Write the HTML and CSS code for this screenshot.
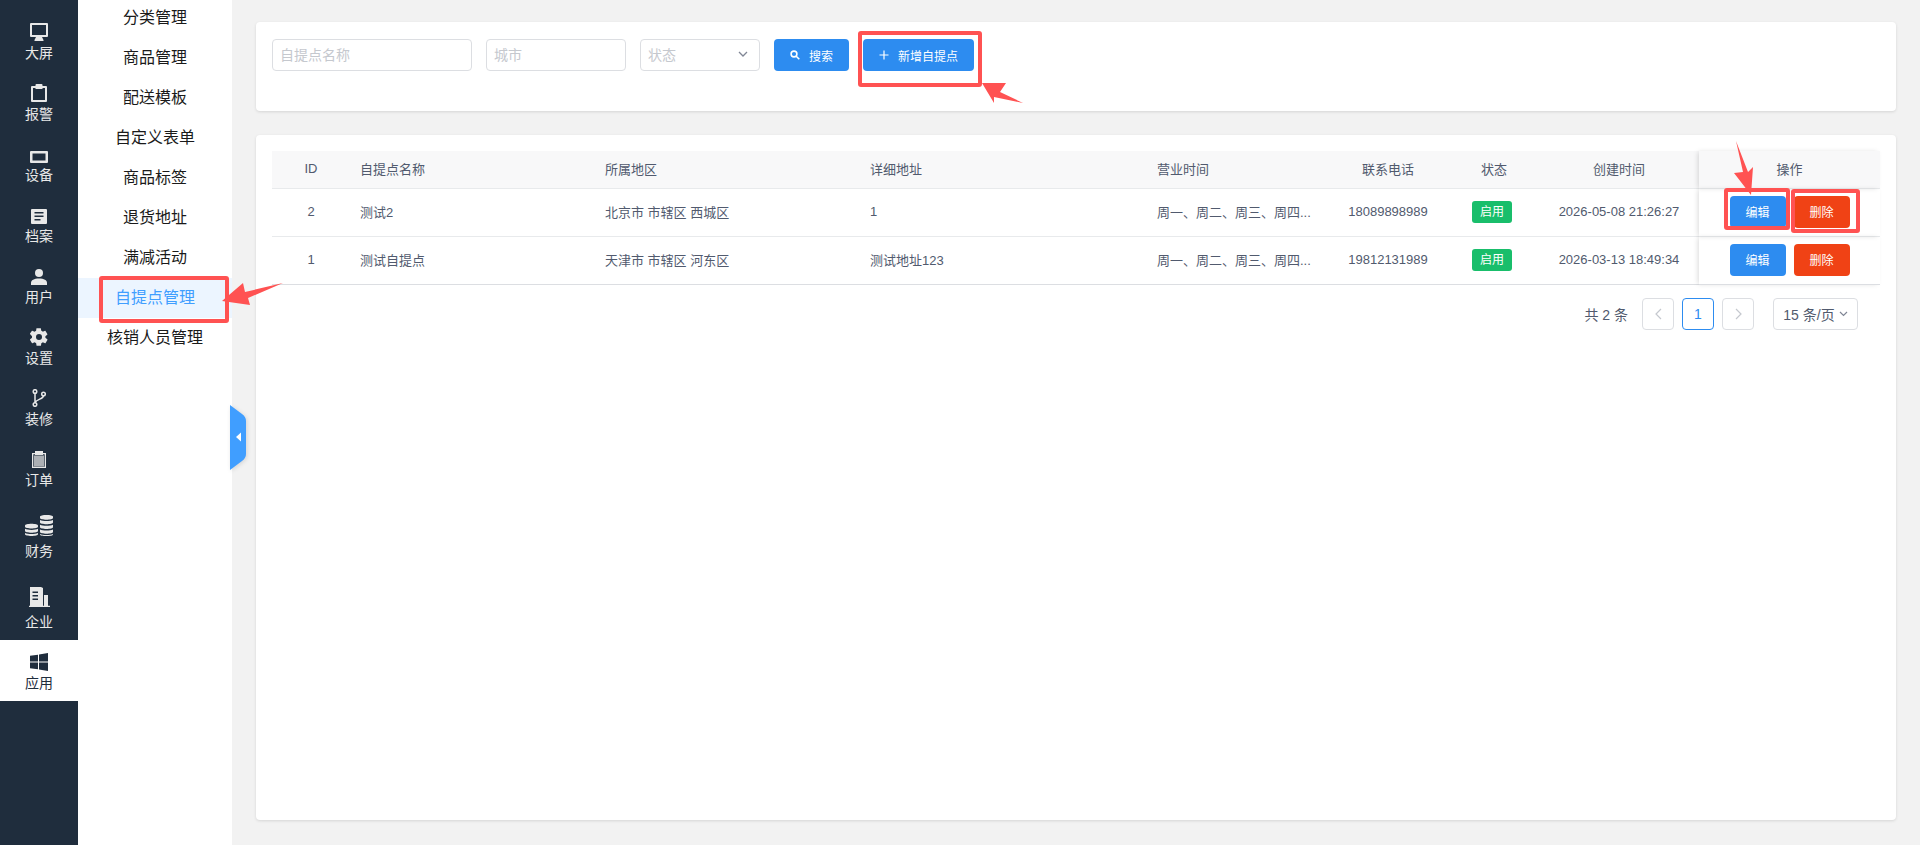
FILE: index.html
```html
<!DOCTYPE html>
<html lang="zh-CN">
<head>
  <meta charset="UTF-8" />
  <title>自提点管理</title>
  <link rel="stylesheet" href="styles.css">
</head>
<body>
  <div class="app">
    <nav class="rail">
      <div class="rail-item">
        <svg class="rail-icon" width="18" height="18" viewBox="0 0 18 18"><path fill="currentColor" fill-rule="evenodd" d="M1 0h16a1 1 0 0 1 1 1v12a1 1 0 0 1-1 1H1a1 1 0 0 1-1-1V1a1 1 0 0 1 1-1zm1 2v10h14V2zM6 14h6l1.500 3v1h-9v-1z"/></svg>
        <span>大屏</span>
      </div>
      <div class="rail-item">
        <svg class="rail-icon" width="16" height="18" viewBox="0 0 16 18"><path fill="currentColor" fill-rule="evenodd" d="M1 2h3.500V1a1 1 0 0 1 1-1h5a1 1 0 0 1 1 1v1H15a1 1 0 0 1 1 1v14a1 1 0 0 1-1 1H1a1 1 0 0 1-1-1V3a1 1 0 0 1 1-1zm1 2v12h12V4h-2.500v1h-7V4z"/></svg>
        <span>报警</span>
      </div>
      <div class="rail-item">
        <svg class="rail-icon" width="18" height="12" viewBox="0 0 18 12"><path fill="currentColor" fill-rule="evenodd" d="M1 0h16a1 1 0 0 1 1 1v10a1 1 0 0 1-1 1H1a1 1 0 0 1-1-1V1a1 1 0 0 1 1-1zm1.500 2.500v7h13v-7z"/></svg>
        <span>设备</span>
      </div>
      <div class="rail-item">
        <svg class="rail-icon" width="16" height="15" viewBox="0 0 16 15"><path fill="currentColor" fill-rule="evenodd" d="M1 0h14a1 1 0 0 1 1 1v13a1 1 0 0 1-1 1H1a1 1 0 0 1-1-1V1a1 1 0 0 1 1-1zm2.500 3v1.500h9V3zm0 3.500V8h9V6.500zm0 3.500v1.500h6V10z"/></svg>
        <span>档案</span>
      </div>
      <div class="rail-item">
        <svg class="rail-icon" width="16" height="16" viewBox="0 0 16 16"><circle cx="8" cy="4" r="4" fill="currentColor"/><path fill="currentColor" d="M0 16v-2c0-3 3-4.500 8-4.500s8 1.500 8 4.500v2z"/></svg>
        <span>用户</span>
      </div>
      <div class="rail-item">
        <svg class="rail-icon" width="18" height="18" viewBox="1.500 1.500 21 21"><path fill="currentColor" d="M19.400 13c.1-.3.100-.7.100-1s0-.7-.1-1l2.200-1.700c.2-.2.300-.4.100-.7l-2.100-3.600c-.1-.2-.4-.3-.6-.2l-2.600 1c-.5-.4-1.100-.8-1.800-1l-.4-2.700c0-.3-.2-.4-.5-.4h-4.200c-.3 0-.5.100-.5.400l-.4 2.700c-.6.300-1.200.6-1.800 1l-2.600-1c-.2-.1-.5 0-.6.200L1.500 8c-.1.300 0 .5.200.7L3.900 11c-.1.300-.1.700-.1 1s0 .7.100 1l-2.200 1.700c-.2.200-.3.400-.1.700l2.100 3.600c.1.200.4.300.6.200l2.600-1c.6.400 1.200.8 1.800 1l.4 2.700c0 .3.200.4.500.4h4.200c.3 0 .5-.1.500-.4l.4-2.700c.7-.3 1.300-.6 1.800-1l2.600 1c.2.100.5 0 .6-.2l2.100-3.600c.1-.3.100-.5-.1-.7zM12 15.500a3.500 3.500 0 1 1 0-7 3.500 3.500 0 0 1 0 7z"/></svg>
        <span>设置</span>
      </div>
      <div class="rail-item">
        <svg class="rail-icon" width="14" height="18" viewBox="0 0 14 18" fill="none" stroke="currentColor" stroke-width="1.500"><circle cx="3" cy="2.500" r="1.800"/><circle cx="3" cy="15.500" r="1.800"/><circle cx="11.500" cy="5" r="1.800"/><path d="M3 4.300v9.400M11.500 6.800c0 3.500-7 3-8.500 6.900"/></svg>
        <span>装修</span>
      </div>
      <div class="rail-item">
        <svg class="rail-icon" width="14" height="17" viewBox="0 0 14 17"><path fill="currentColor" fill-rule="evenodd" d="M0 2h3V0h8v2h3v15H0zm1.300 1.300v12.400h11.400V3.300H11V4H3v-.7z"/><rect x="2" y="4.500" width="10" height="11" fill="currentColor" opacity=".7"/></svg>
        <span>订单</span>
      </div>
      <div class="rail-item rail-item-big">
        <svg class="rail-icon" width="28" height="21" viewBox="0 0 28 21"><g fill="currentColor"><path d="M0 10.500c0-1 3-1.800 6.500-1.800s6.500.8 6.500 1.800v1.300c0 1-3 1.700-6.500 1.700S0 12.800 0 11.800zM0 13.800c1.500.8 3.800 1.100 6.500 1.100s5-.3 6.500-1.100v2.200c0 1-3 1.700-6.500 1.700S0 17 0 16zM0 18c1.500.8 3.800 1.100 6.500 1.100S11.500 18.800 13 18v1.300c0 1-3 1.700-6.500 1.700S0 20.300 0 19.300z"/><path d="M15 1.700C15 .7 18 0 21.500 0S28 .7 28 1.700V3c0 1-3 1.700-6.500 1.700S15 4 15 3zM15 5c1.500.8 3.800 1.100 6.500 1.100S26.500 5.800 28 5v2.600c0 1-3 1.700-6.500 1.700S15 8.600 15 7.600zM15 9.700c1.500.8 3.800 1.100 6.500 1.100s5-.3 6.500-1.100v2.600c0 1-3 1.700-6.500 1.700S15 13.300 15 12.300zM15 14.400c1.500.8 3.800 1.100 6.500 1.100s5-.3 6.500-1.100V17c0 1-3 1.700-6.500 1.700S15 18 15 17zM15 19c1.500.7 3.800 1 6.500 1s5-.3 6.500-1v.5c0 1-3 1.500-6.500 1.500S15 20.500 15 19.500z"/></g></svg>
        <span>财务</span>
      </div>
      <div class="rail-item rail-item-big">
        <svg class="rail-icon" width="21" height="20" viewBox="0 0 21 20"><path fill="currentColor" fill-rule="evenodd" d="M1 0h11l2 1v18h-1V19H1zm2.500 4.500V6H9V4.500zm0 3.500v1.500H9V8zm0 3.500V13H9v-1.500z"/><path fill="currentColor" d="M15 8h4v11h-4zM0 18.800h21V20H0z"/></svg>
        <span>企业</span>
      </div>
      <div class="rail-item rail-item-on">
        <svg class="rail-icon" width="18" height="18" viewBox="0 0 18 18"><path fill="currentColor" d="M0 2.800l8-1.100v6.800H0zM9 1.500L18 0v8.500H9zM0 9.500h8v6.800l-8-1.100zM9 9.500h9V18l-9-1.500z"/></svg>
        <span>应用</span>
      </div>
    </nav>

    <aside class="submenu">
      <div class="submenu-item">分类管理</div>
      <div class="submenu-item">商品管理</div>
      <div class="submenu-item">配送模板</div>
      <div class="submenu-item">自定义表单</div>
      <div class="submenu-item">商品标签</div>
      <div class="submenu-item">退货地址</div>
      <div class="submenu-item">满减活动</div>
      <div class="submenu-item submenu-item-on">自提点管理</div>
      <div class="submenu-item">核销人员管理</div>
    </aside>

    <main class="content">
      <section class="card card-search">
        <form class="search-form">
          <input class="field field-name" type="text" placeholder="自提点名称" />
          <input class="field field-city" type="text" placeholder="城市" />
          <div class="field field-status">
            <span>状态</span>
            <svg width="10" height="6" viewBox="0 0 10 6" fill="none" stroke="#808695" stroke-width="1.300"><path d="M1 1l4 4 4-4"/></svg>
          </div>
          <button class="btn btn-blue btn-search" type="button">
            <svg width="10" height="10" viewBox="0 0 10 10" fill="none" stroke="#fff" stroke-width="1.600"><circle cx="4" cy="4" r="2.900"/><path d="M6.200 6.200L9.300 9.300"/></svg>
            搜索
          </button>
          <button class="btn btn-blue btn-add" type="button">
            <svg width="10" height="10" viewBox="0 0 10 10" stroke="#fff" stroke-width="1.200"><path d="M5 .5v9M.5 5h9"/></svg>
            新增自提点
          </button>
        </form>
      </section>

      <section class="card card-table">
        <table class="grid">
          <colgroup>
            <col class="col-id"><col class="col-name"><col class="col-region"><col class="col-addr"><col class="col-hours"><col class="col-phone"><col class="col-state"><col class="col-time"><col class="col-op">
          </colgroup>
          <thead>
            <tr>
              <th class="center">ID</th>
              <th>自提点名称</th>
              <th>所属地区</th>
              <th>详细地址</th>
              <th>营业时间</th>
              <th class="center">联系电话</th>
              <th class="center">状态</th>
              <th class="center">创建时间</th>
              <th class="center cell-op">操作</th>
            </tr>
          </thead>
          <tbody>
            <tr>
              <td class="center">2</td>
              <td>测试2</td>
              <td>北京市 市辖区 西城区</td>
              <td>1</td>
              <td>周一、周二、周三、周四...</td>
              <td class="center">18089898989</td>
              <td class="center"><span class="tag">启用</span></td>
              <td class="center">2026-05-08 21:26:27</td>
              <td class="center cell-op"><button class="btn btn-blue btn-row" type="button">编辑</button><button class="btn btn-red btn-row" type="button">删除</button></td>
            </tr>
            <tr>
              <td class="center">1</td>
              <td>测试自提点</td>
              <td>天津市 市辖区 河东区</td>
              <td>测试地址123</td>
              <td>周一、周二、周三、周四...</td>
              <td class="center">19812131989</td>
              <td class="center"><span class="tag">启用</span></td>
              <td class="center">2026-03-13 18:49:34</td>
              <td class="center cell-op"><button class="btn btn-blue btn-row" type="button">编辑</button><button class="btn btn-red btn-row" type="button">删除</button></td>
            </tr>
          </tbody>
        </table>

        <div class="pager">
          <span class="pager-total">共 2 条</span>
          <span class="page-box page-off"><svg width="7" height="12" viewBox="0 0 7 12" fill="none" stroke="#c5c8ce" stroke-width="1.200"><path d="M6 1L1 6l5 5"/></svg></span>
          <span class="page-box page-on">1</span>
          <span class="page-box page-off"><svg width="7" height="12" viewBox="0 0 7 12" fill="none" stroke="#c5c8ce" stroke-width="1.200"><path d="M1 1l5 5-5 5"/></svg></span>
          <span class="page-size">15 条/页 <svg width="9" height="6" viewBox="0 0 9 6" fill="none" stroke="#808695" stroke-width="1.200"><path d="M1 1l3.500 3.500L8 1"/></svg></span>
        </div>
      </section>
    </main>

    <svg class="collapse" width="16" height="65" viewBox="0 0 16 65">
      <path fill="#409eff" d="M0 0l12 9q4 3 4 7v33q0 4-4 7L0 65z"/>
      <path fill="#fff" d="M11 27.500v9l-5-4.500z"/>
    </svg>

    <!-- red marks drawn over the screenshot -->
    <svg class="marks" width="1920" height="845" viewBox="0 0 1920 845">
      <g fill="none" stroke="#ff5252" stroke-width="4">
        <rect x="101" y="278" width="126" height="43" rx="1"/>
        <rect x="860" y="33" width="120" height="52" rx="1"/>
        <rect x="1726" y="190" width="62" height="38" rx="1"/>
        <rect x="1793" y="191" width="65" height="40" rx="1"/>
      </g>
      <g fill="#ff5252">
        <path d="M222 301L243 283 245 292 283 283 248 298 250 305z"/>
        <path d="M982 83L1006 83 1000 92 1023 103 994 97 994 103z"/>
        <path d="M1736 141L1748 172 1753 167 1751 195 1734 173 1743 172z"/>
      </g>
    </svg>
  </div>
</body>
</html>
```

FILE: styles.css
```css
* {
  box-sizing: border-box;
}

body {
  margin: 0;
  font-family: "Liberation Sans", "Noto Sans CJK SC", sans-serif;
  font-size: 13px;
  color: #515a6e;
  background-color: #f2f2f2;
}

.app {
  position: relative;
  display: flex;
  height: 845px;
  overflow: hidden;
}

/* left icon rail */
.rail {
  flex: 0 0 78px;
  padding-top: 10px;
  background-color: #1f2d3d;
  color: #e8e8e8;
}

.rail-item {
  display: flex;
  flex-direction: column;
  align-items: center;
  justify-content: flex-end;
  height: 61px;
  padding-bottom: 8px;
  font-size: 14px;
  line-height: 20px;
}

.rail-item-big {
  height: 71px;
}

.rail-item-on {
  background-color: #fff;
  color: #1f2d3d;
}

.rail-icon {
  flex: none;
  margin-bottom: 2px;
}

.rail-item-big .rail-icon {
  margin-bottom: 5px;
}

/* second level menu */
.submenu {
  flex: 0 0 154px;
  margin-top: -2px;
  background-color: #fff;
}

.submenu-item {
  height: 40px;
  font-size: 16px;
  line-height: 40px;
  text-align: center;
  color: #1a1a1a;
}

.submenu-item-on {
  background-color: #ecf5ff;
  color: #409eff;
}

/* main area */
.content {
  flex: 1;
  display: flex;
  flex-direction: column;
  gap: 24px;
  padding: 22px 24px 25px;
}

.card {
  background-color: #fff;
  border-radius: 4px;
  box-shadow: 0 1px 3px rgba(0,0,0,0.12);
}

.card-search {
  height: 89px;
  padding: 17px 16px;
}

.card-table {
  flex: 1;
  padding: 16px;
}

.search-form {
  display: flex;
  gap: 14px;
}

.field {
  height: 32px;
  padding: 0 7px;
  border: 1px solid #dcdee2;
  border-radius: 4px;
  background-color: #fff;
  font-family: inherit;
  font-size: 14px;
  color: #c5c8ce;
}

.field::placeholder {
  color: #c5c8ce;
}

.field-name {
  width: 200px;
}

.field-city {
  width: 140px;
}

.field-status {
  display: flex;
  align-items: center;
  justify-content: space-between;
  width: 120px;
  padding-right: 11px;
  padding-bottom: 2px;
}

.btn {
  display: inline-flex;
  align-items: center;
  justify-content: center;
  gap: 9px;
  height: 32px;
  padding: 0;
  border: none;
  border-radius: 4px;
  font-family: inherit;
  font-size: 12px;
  color: #fff;
  cursor: pointer;
}

.btn-blue {
  background-color: #2d8cf0;
}

.btn-red {
  background-color: #f04215;
}

.btn-search {
  width: 75px;
}

.btn-add {
  width: 111px;
}

.btn-row {
  width: 56px;
  margin-left: 8px;
}

.btn-row:first-child {
  margin-left: 0;
}

/* table */
.grid {
  width: 1608px;
  table-layout: fixed;
  border-collapse: separate;
  border-spacing: 0;
}

.col-id { width: 78px; }
.col-name { width: 245px; }
.col-region { width: 265px; }
.col-addr { width: 287px; }
.col-hours { width: 180px; }
.col-phone { width: 122px; }
.col-state { width: 90px; }
.col-time { width: 160px; }
.col-op { width: 181px; }

.grid th,
.grid td {
  padding: 0 10px 2px;
  border-bottom: 1px solid #e8eaec;
  text-align: left;
  white-space: nowrap;
}

.grid th {
  height: 38px;
  background-color: #f8f8f9;
  font-weight: 400;
}

.grid td {
  height: 48px;
}

.grid .center {
  text-align: center;
}

.grid .cell-op {
  position: relative;
  padding: 0 0 2px;
  box-shadow: -2px 0 5px -1px rgba(0,0,0,0.15);
}

.grid .cell-op .btn {
  vertical-align: middle;
}

.tag {
  display: inline-block;
  width: 40px;
  height: 22px;
  margin-right: 4px;
  border-radius: 3px;
  background-color: #19be6b;
  font-size: 12px;
  line-height: 22px;
  text-align: center;
  color: #fff;
}

.grid tbody tr:last-child td {
  border-bottom-color: #dcdee2;
}

/* pagination */
.pager {
  display: flex;
  align-items: center;
  justify-content: flex-end;
  gap: 8px;
  margin-top: 13px;
  padding-right: 22px;
  font-size: 14px;
}

.pager-total {
  margin-right: 6px;
  padding-bottom: 1px;
}

.page-box,
.page-size {
  display: flex;
  align-items: center;
  justify-content: center;
  height: 32px;
  border: 1px solid #dcdee2;
  border-radius: 4px;
}

.page-box {
  width: 32px;
}

.page-on {
  border-color: #2d8cf0;
  color: #2d8cf0;
}

.page-size {
  gap: 4px;
  width: 85px;
  margin-left: 11px;
  padding-bottom: 1px;
}

/* overlays */
.collapse {
  position: absolute;
  left: 230px;
  top: 405px;
  filter: drop-shadow(1px 1px 2px rgba(0,0,0,0.12));
}

.marks {
  position: absolute;
  left: 0;
  top: 0;
  pointer-events: none;
}
```
